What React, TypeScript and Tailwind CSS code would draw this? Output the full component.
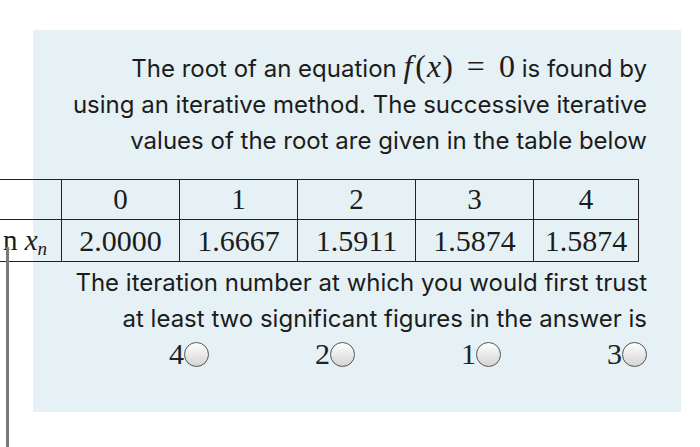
import React from 'react';

const serif = "font-['Liberation_Serif','Times_New_Roman',serif]";
const sans = "font-['Inter','Noto_Sans',sans-serif]";

const iterations = ['0', '1', '2', '3', '4'];
const values = ['2.0000', '1.6667', '1.5911', '1.5874', '1.5874'];
const options = ['4', '2', '1', '3'];

const Radio: React.FC<{ label: string }> = ({ label }) => (
  <label className="flex items-center justify-end">
    <span className={`${serif} text-[30px] leading-none text-[#222]`}>{label}</span>
    <span className="w-[25px] h-[25px] rounded-full border-[1.5px] border-[#555] bg-gradient-to-b from-white to-[#d4d4d4]" />
  </label>
);

const App: React.FC = () => {
  return (
    <div className="relative w-[700px] h-[447px] overflow-hidden bg-white">
      <div className="ml-[33px] mt-[30px] w-[648px] h-[382px] bg-[#e5f1f4] pt-[20px]">
        <div className={`${sans} text-[24px] leading-[36px] text-[#1c1c1c] text-right pr-[34px]`}>
          <p>
            The root of an equation{' '}
            <span className={`${serif} text-[32px] leading-none`}>
              <i>f</i>
              <span className="ml-[3px]">(</span>
              <i className="px-[1px]">x</i>)<span className="mx-[14px]">=</span>0
            </span>{' '}
            is found by
          </p>
          <p>using an iterative method. The successive iterative</p>
          <p>values of the root are given in the table below</p>
        </div>

        <table className={`${serif} mt-[20px] ml-[-143px] border-collapse text-[#1c1c1c]`}>
          <tbody>
            <tr className="h-[40px]">
              <td className="w-[171px] border-[1.5px] border-[#222]" />
              {iterations.map((it, i) => (
                <td
                  key={it}
                  className={`${i === 4 ? 'w-[105px]' : 'w-[118px]'} border-[1.5px] border-[#222] text-center text-[29px] leading-none`}
                >
                  {it}
                </td>
              ))}
            </tr>
            <tr className="h-[42px]">
              <td className="border-[1.5px] border-[#222] text-right pr-[14px] text-[29px] leading-none whitespace-nowrap">
                n <i>x</i>
                <sub className="text-[19px] italic">n</sub>
              </td>
              {values.map((v, i) => (
                <td key={i} className="border-[1.5px] border-[#222] text-center text-[30px] leading-none">
                  {v}
                </td>
              ))}
            </tr>
          </tbody>
        </table>

        <div className={`${sans} mt-[3px] text-[24px] leading-[36px] text-[#1c1c1c] text-right pr-[34px]`}>
          <p>The iteration number at which you would first trust</p>
          <p>at least two significant figures in the answer is</p>
        </div>

        <div className="mt-[2px] ml-[30px] w-[584px] grid grid-cols-4">
          {options.map((o) => (
            <Radio key={o} label={o} />
          ))}
        </div>
      </div>

      <div className="absolute left-[6px] top-[247px] w-[3px] h-[200px] bg-[#7a7a7a]" />
    </div>
  );
};

export default App;
